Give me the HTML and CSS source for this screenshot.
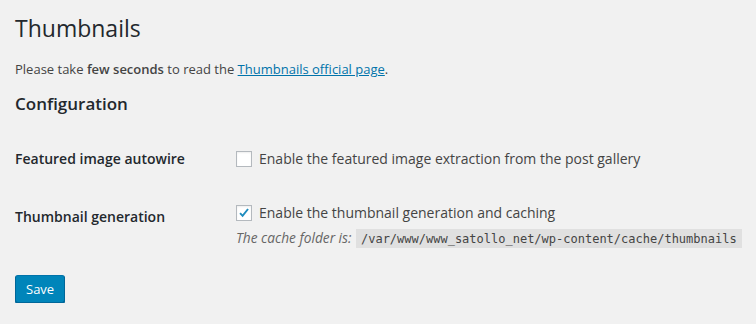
FILE: index.html
```html
<!DOCTYPE html>
<html lang="en">
<head>
    <meta charset="UTF-8">
    <title>Thumbnails</title>
    <link rel="stylesheet" href="styles.css">
</head>
<body>
    <div class="wrap">
        <h1 class="page-title">Thumbnails</h1>
        <p class="intro">Please take <strong>few seconds</strong> to read the <a href="#">Thumbnails official page</a>.</p>
        <h2 class="section-title">Configuration</h2>

        <div class="form-table">
            <div class="row">
                <div class="th">Featured image autowire</div>
                <div class="td">
                    <label class="check"><span class="box"></span>Enable the featured image extraction from the post gallery</label>
                </div>
            </div>
            <div class="row">
                <div class="th th-low">Thumbnail generation</div>
                <div class="td">
                    <label class="check"><span class="box">
                        <svg width="16" height="16" viewBox="0 0 16 16"><path d="M3.5 8.2 L6.4 11.2 L12.6 3.4" fill="none" stroke="#1e8cbe" stroke-width="2.2"/></svg>
                    </span>Enable the thumbnail generation and caching</label>
                    <p class="description">The cache folder is: <code>/var/www/www_satollo_net/wp-content/cache/thumbnails</code></p>
                </div>
            </div>
        </div>

        <div class="submit">
            <a href="#" class="button-primary">Save</a>
        </div>
    </div>
</body>
</html>
```
FILE: styles.css
```css
* {
    margin: 0;
    padding: 0;
    box-sizing: border-box;
}
body {
    background: #f1f1f1;
    color: #444;
    font-family: "Open Sans", sans-serif;
    font-size: 13px;
    line-height: 1.5;
}
.wrap {
    padding: 14px 15px 0 15px;
}
.page-title {
    font-size: 23px;
    font-weight: 400;
    line-height: 29px;
    color: #23282d;
}
.intro {
    margin-top: 17px;
    line-height: 19px;
}
.intro strong {
    font-weight: 600;
}
.intro a {
    color: #0073aa;
}
.section-title {
    margin-top: 14px;
    font-size: 17px;
    font-weight: 600;
    line-height: 22px;
    color: #23282d;
}
.form-table {
    margin-top: 34px;
}
.row {
    display: flex;
    margin-bottom: 34px;
}
.row:last-child {
    margin-bottom: 26px;
}
.th {
    width: 221px;
    flex-shrink: 0;
    font-weight: 600;
    font-size: 14px;
    color: #23282d;
    line-height: 20px;
}
.th-low {
    padding-top: 4px;
}
.td {
    flex: 1;
    font-size: 14px;
}
.check {
    display: flex;
    align-items: center;
    line-height: 20px;
}
.box {
    width: 16px;
    height: 16px;
    border: 1px solid #b4b9be;
    background: #fff;
    box-shadow: inset 0 1px 2px rgba(0,0,0,.07);
    margin-right: 7px;
    display: flex;
    align-items: center;
    justify-content: center;
}
.box svg {
    display: block;
}
.description {
    margin-top: 5px;
    font-style: italic;
    color: #666;
    font-size: 13.7px;
    line-height: 20px;
    white-space: nowrap;
}
.description code {
    font-style: normal;
    font-family: "DejaVu Sans Mono", monospace;
    font-size: 12px;
    background: rgba(0,0,0,.07);
    padding: 3px 5px 2px;
    margin-left: 1px;
    color: #444;
}
.submit {
    margin-top: 1px;
}
.button-primary {
    display: inline-block;
    height: 28px;
    line-height: 26px;
    padding: 0 10px 1px;
    background: #0085ba;
    border: 1px solid #0073aa;
    border-color: #0073aa #006799 #006799;
    box-shadow: 0 1px 0 #006799;
    border-radius: 3px;
    color: #fff;
    text-decoration: none;
    font-size: 13px;
}
```
